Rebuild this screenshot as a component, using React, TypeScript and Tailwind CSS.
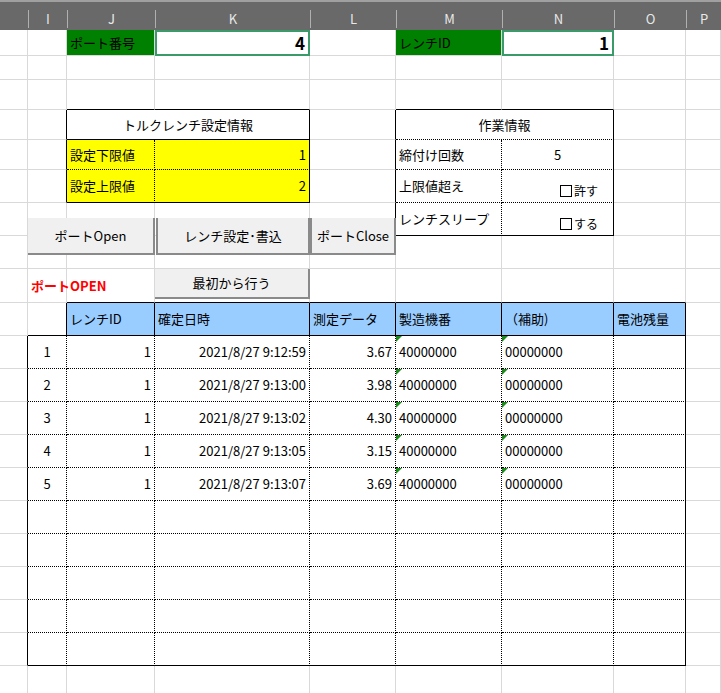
import React from "react";

const W = [28, 39, 88, 155, 86, 106, 112, 72, 35];
const LETTERS = ["", "I", "J", "K", "L", "M", "N", "O", "P"];

const G = "border-r border-b border-r-[#d9d9d9] border-b-[#d9d9d9]";

type C = { w: number; b?: string; className?: string; children?: React.ReactNode };

function Cell({ w, b = G, className = "", children }: C) {
  return (
    <div
      className={`shrink-0 h-full flex items-center px-[3px] whitespace-nowrap overflow-visible relative ${b} ${className}`}
      style={{ width: w }}
    >
      {children}
    </div>
  );
}

function Row({ h, children }: { h: number; children: React.ReactNode }) {
  return (
    <div className="flex" style={{ height: h }}>
      {children}
    </div>
  );
}

function Empty({ h }: { h: number }) {
  return (
    <Row h={h}>
      {W.map((w, i) => (
        <Cell key={i} w={w} />
      ))}
    </Row>
  );
}

function Box({ checked, label }: { checked?: boolean; label: string }) {
  return (
    <span className="flex items-center gap-[2px] text-[12px]">
      <span className="w-[12px] h-[12px] border border-black bg-white inline-block">{checked ? "✓" : ""}</span>
      {label}
    </span>
  );
}

function Tri() {
  return (
    <span className="absolute left-0 top-0 w-0 h-0 border-t-[6px] border-r-[6px] border-t-[#1e8a1e] border-r-transparent" />
  );
}

const rows = [
  ["1", "2021/8/27 9:12:59", "3.67"],
  ["2", "2021/8/27 9:13:00", "3.98"],
  ["3", "2021/8/27 9:13:02", "4.30"],
  ["4", "2021/8/27 9:13:05", "3.15"],
  ["5", "2021/8/27 9:13:07", "3.69"],
];

const DOT = "border-r border-b border-r-black border-b-black [border-right-style:dotted] [border-bottom-style:dotted]";
const DOT_SOLID_R = "border-r border-b border-r-black border-b-black [border-bottom-style:dotted]";
const DOT_LAST = "border-r border-b border-r-black border-b-black [border-right-style:dotted]";
const SOLID = "border-r border-b border-r-black border-b-black";
const LBLACK = "border-r border-b border-r-black border-b-[#d9d9d9]";

function Btn({ className, children }: { className: string; children: React.ReactNode }) {
  return (
    <div
      className={`absolute flex items-center justify-center bg-[#f0f0f0] border-r-2 border-b-2 border-r-[#8a8a8a] border-b-[#8a8a8a] text-[13px] ${className}`}
    >
      {children}
    </div>
  );
}

export default function App() {
  const font = { fontFamily: '"Noto Sans CJK JP", "Liberation Sans", sans-serif' };
  return (
    <div className="relative w-[721px] h-[693px] overflow-hidden bg-white text-black text-[13px]" style={font}>
      {/* column header bar */}
      <div className="flex h-[30px] bg-[#696969] border-t-2 border-t-[#a0a0a0]">
        {W.map((w, i) => (
          <div
            key={i}
            className="shrink-0 h-full flex items-end justify-center pb-[2px] text-[13px] text-[#e8e8e8]"
            style={{ width: w }}
          >
            <div className={`w-full text-center ${i > 0 ? "border-l border-l-[#b0b0b0]" : ""} h-[18px] leading-[18px]`}>
              {LETTERS[i]}
            </div>
          </div>
        ))}
      </div>

      {/* row 1 */}
      <Row h={26}>
        <Cell w={28} />
        <Cell w={39} />
        <Cell w={88} className="bg-[#008000]">ポート番号</Cell>
        <Cell w={155} b="border-2 border-[#3a9a6a]" className="justify-end text-[17px] font-bold">4</Cell>
        <Cell w={86} />
        <Cell w={106} className="bg-[#008000]">レンチID</Cell>
        <Cell w={112} b="border-2 border-[#3a9a6a]" className="justify-end text-[17px] font-bold">1</Cell>
        <Cell w={72} />
        <Cell w={35} />
      </Row>
      <Empty h={24} />
      {/* row 3 */}
      <Row h={30}>
        <Cell w={28} />
        <Cell w={39} />
        <Cell w={88} b="border-r border-b border-r-[#d9d9d9] border-b-black" />
        <Cell w={155} b="border-r border-b border-r-[#d9d9d9] border-b-black" />
        <Cell w={86} />
        <Cell w={106} b="border-r border-b border-r-[#d9d9d9] border-b-black" />
        <Cell w={112} b="border-r border-b border-r-[#d9d9d9] border-b-black" />
        <Cell w={72} />
        <Cell w={35} />
      </Row>
      {/* row 4 */}
      <Row h={30}>
        <Cell w={28} />
        <Cell w={39} b={LBLACK} />
        <Cell w={243} b={SOLID} className="justify-center">トルクレンチ設定情報</Cell>
        <Cell w={86} b={LBLACK} />
        <Cell w={218} b={DOT_SOLID_R} className="justify-center">作業情報</Cell>
        <Cell w={72} />
        <Cell w={35} />
      </Row>
      {/* row 5 */}
      <Row h={30}>
        <Cell w={28} />
        <Cell w={39} b={LBLACK} />
        <Cell w={88} b={DOT} className="bg-[#ffff00]">設定下限値</Cell>
        <Cell w={155} b={DOT_SOLID_R} className="bg-[#ffff00] justify-end">1</Cell>
        <Cell w={86} b={LBLACK} />
        <Cell w={106} b={DOT}>締付け回数</Cell>
        <Cell w={112} b={DOT_SOLID_R} className="justify-center">5</Cell>
        <Cell w={72} />
        <Cell w={35} />
      </Row>
      {/* row 6 */}
      <Row h={33}>
        <Cell w={28} />
        <Cell w={39} b={LBLACK} />
        <Cell w={88} b={DOT_LAST} className="bg-[#ffff00]">設定上限値</Cell>
        <Cell w={155} b={SOLID} className="bg-[#ffff00] justify-end">2</Cell>
        <Cell w={86} b={LBLACK} />
        <Cell w={106} b={DOT} className="items-start pt-[6px]">上限値超え</Cell>
        <Cell w={112} b={DOT_SOLID_R} className="items-end pb-[2px] pl-[58px]"><Box label="許す" /></Cell>
        <Cell w={72} />
        <Cell w={35} />
      </Row>
      {/* row 7 */}
      <Row h={33}>
        <Cell w={28} />
        <Cell w={39} />
        <Cell w={88} />
        <Cell w={155} />
        <Cell w={86} b={LBLACK} />
        <Cell w={106} b={DOT_LAST} className="items-start pt-[6px]">レンチスリープ</Cell>
        <Cell w={112} b={SOLID} className="items-end pb-[2px] pl-[58px]"><Box label="する" /></Cell>
        <Cell w={72} />
        <Cell w={35} />
      </Row>
      <Empty h={33} />
      {/* row 9 */}
      <Row h={34}>
        <Cell w={28} />
        <Cell w={39} className="text-[#ff0000] font-bold">ポートOPEN</Cell>
        {W.slice(2).map((w, i) => (
          <Cell key={i} w={w} b={i < 6 ? "border-r border-b border-r-[#d9d9d9] border-b-black" : G} />
        ))}
      </Row>
      {/* header row */}
      <Row h={33}>
        <Cell w={28} />
        <Cell w={39} b="border-r border-b border-r-black border-b-black" />
        {["レンチID", "確定日時", "測定データ", "製造機番", "（補助)", "電池残量"].map((t, i) => (
          <Cell key={t} w={W[i + 2]} b={SOLID} className="bg-[#99ccff]">{t}</Cell>
        ))}
        <Cell w={35} />
      </Row>
      {/* data rows */}
      {Array.from({ length: 10 }).map((_, r) => {
        const d = rows[r];
        const last = r === 9;
        const b = last ? DOT_LAST : DOT;
        const bEnd = last ? SOLID : DOT_SOLID_R;
        return (
          <Row key={r} h={33}>
            <Cell w={28} b="border-r border-b border-r-black border-b-[#d9d9d9]" />
            <Cell w={39} b={b} className="justify-center">{d ? d[0] : ""}</Cell>
            <Cell w={88} b={b} className="justify-end">{d ? "1" : ""}</Cell>
            <Cell w={155} b={b} className="justify-end">{d ? d[1] : ""}</Cell>
            <Cell w={86} b={b} className="justify-end">{d ? d[2] : ""}</Cell>
            <Cell w={106} b={b}>{d && <><Tri />40000000</>}</Cell>
            <Cell w={112} b={b}>{d && <><Tri />00000000</>}</Cell>
            <Cell w={72} b={bEnd} />
            <Cell w={35} />
          </Row>
        );
      })}
      <Empty h={33} />

      {/* form buttons */}
      <Btn className="left-[28px] top-[218px] w-[127px] h-[37px]">ポートOpen</Btn>
      <Btn className="left-[156px] top-[218px] w-[154px] h-[37px] border-l-2 border-l-[#8a8a8a]">レンチ設定･書込</Btn>
      <Btn className="left-[310px] top-[218px] w-[86px] h-[37px] border-l-2 border-l-[#8a8a8a]">ポートClose</Btn>
      <Btn className="left-[155px] top-[269px] w-[155px] h-[30px]">最初から行う</Btn>
    </div>
  );
}
